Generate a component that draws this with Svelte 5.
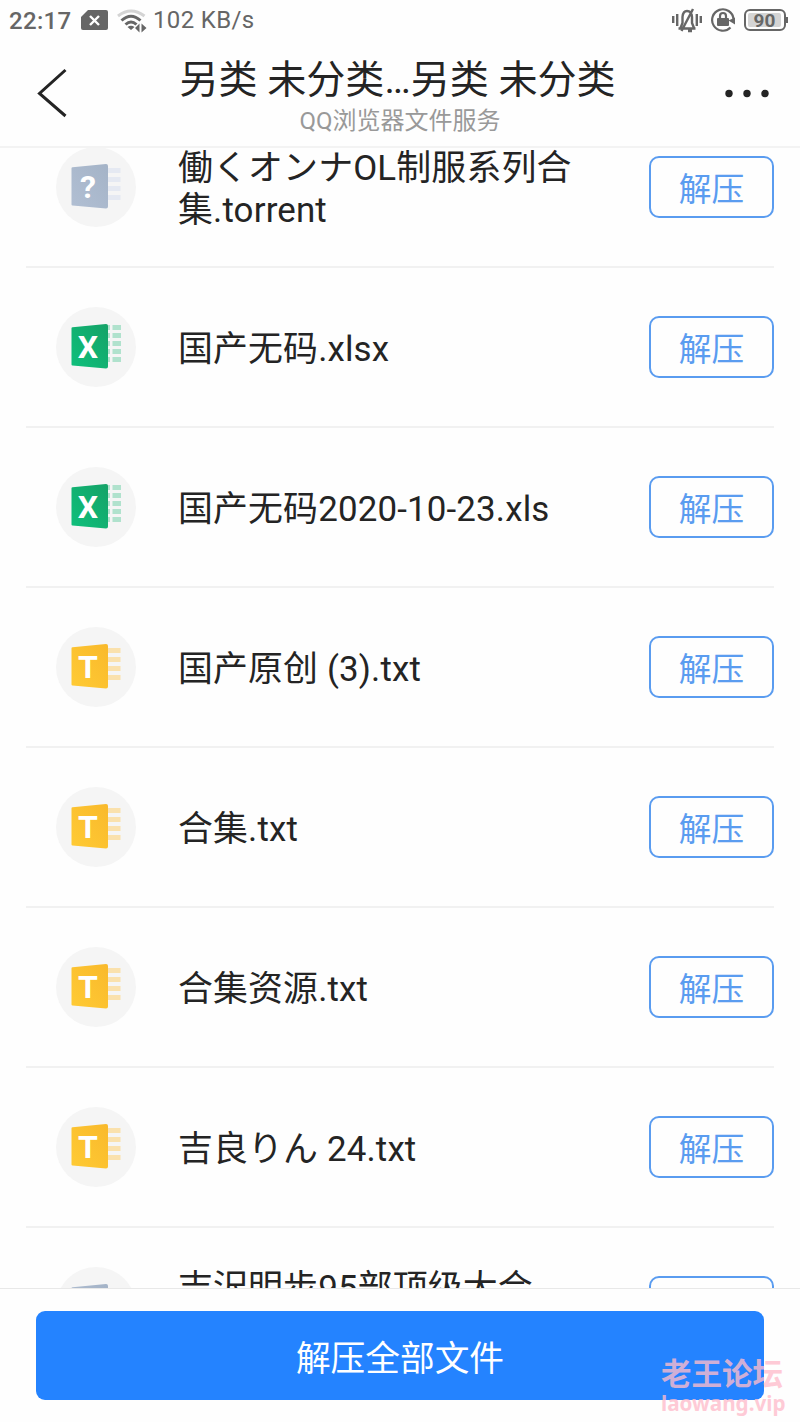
<script lang="ts">
    type FileKind = "unknown" | "sheet" | "text"

    const files: { name: string; kind: FileKind }[] = [
        { name: "働くオンナOL制服系列合集.torrent", kind: "unknown" },
        { name: "国产无码.xlsx", kind: "sheet" },
        { name: "国产无码2020-10-23.xls", kind: "sheet" },
        { name: "国产原创 (3).txt", kind: "text" },
        { name: "合集.txt", kind: "text" },
        { name: "合集资源.txt", kind: "text" },
        { name: "吉良りん 24.txt", kind: "text" },
        { name: "吉沢明步95部顶级大合集.torrent", kind: "unknown" },
    ]

    const letters = { unknown: "?", sheet: "X", text: "T" }
</script>

<div class="screen">
    <div class="status">
        <span class="clock">22:17</span>
        <svg class="sim" width="28" height="20" viewBox="0 0 28 20">
            <path d="M7 0H25Q27 0 27 2V18Q27 20 25 20H2Q0 20 0 18V7Z" />
            <path class="line" d="M9 6L18 15M18 6L9 15" />
        </svg>
        <svg class="wifi" width="32" height="24" viewBox="0 0 32 24">
            <path class="faint" d="M1 7Q14 -3 27.500 7" />
            <path d="M4.500 11.500Q14 3 23.500 11.500M8.500 15.500Q14 10.500 19.500 15.500" />
            <path class="fill" d="M10.500 18Q14 15.500 17.500 18L14 21ZM18 19L22.500 14.500V23.500ZM24.500 14.500L29.500 19L24.500 23.500Z" />
        </svg>
        <span class="speed">102 KB/s</span>
        <svg class="bell" width="30" height="26" viewBox="0 0 30 26">
            <path d="M1.200 9V16M5.200 7V19M24.800 7V19M28.800 9V16M6.500 21.500H23.500M8.500 21L10.500 16V10Q11 4 15 4Q19.500 4 20 10V16L22 21M21 2L9.500 24M16 24H20" />
        </svg>
        <svg class="lock" width="26" height="26" viewBox="0 0 26 26">
            <path class="ring" d="M20.500 20.500A10.700 10.700 0 1 1 23.500 12" />
            <path d="M18.500 13.500L25 17.500V10.500Z" />
            <rect x="7" y="11" width="12" height="8" rx="1" />
            <path class="shackle" d="M10 11V9Q10 6 13 6Q16 6 16 9V11" />
        </svg>
        <span class="battery"><span class="level">90</span></span>
        <span class="tip"></span>
    </div>

    <header>
        <svg class="back" width="32" height="50" viewBox="0 0 32 50">
            <path d="M28.500 2L2.500 25.500L28.500 48" />
        </svg>
        <div class="titles">
            <h1>另类 未分类…另类 未分类</h1>
            <p>QQ浏览器文件服务</p>
        </div>
        <svg class="more" width="46" height="10" viewBox="0 0 46 10">
            <circle cx="5" cy="5.500" r="3.700" />
            <circle cx="23" cy="5.500" r="3.700" />
            <circle cx="41" cy="5.500" r="3.700" />
        </svg>
    </header>

    <main>
        <ul>
            {#each files as file}
                <li>
                    <svg class="icon {file.kind}" width="80" height="80" viewBox="0 0 80 80">
                        <defs>
                            <linearGradient id="sheet" x1="0" y1="1" x2="1" y2="0">
                                <stop offset="0" stop-color="#0fc07c" />
                                <stop offset="1" stop-color="#14a267" />
                            </linearGradient>
                            <linearGradient id="text" x1="0" y1="1" x2="1" y2="0">
                                <stop offset="0" stop-color="#ffcb35" />
                                <stop offset="1" stop-color="#f9b92b" />
                            </linearGradient>
                            <linearGradient id="unknown" x1="0" y1="1" x2="1" y2="0">
                                <stop offset="0" stop-color="#b1bfd3" />
                                <stop offset="1" stop-color="#a4b3c7" />
                            </linearGradient>
                        </defs>
                        <circle cx="40" cy="40" r="40" />
                        {#if file.kind === "sheet"}
                            <path class="rows" d="M50 20.500H54M50 28.500H54M50 36.500H54M50 44.500H54M50 52.500H54M56.500 20.500H65M56.500 28.500H65M56.500 36.500H65M56.500 44.500H65M56.500 52.500H65" />
                        {:else}
                            <path class="rows" d="M50 23.500H64.500M50 32.500H64.500M50 41.500H64.500M50 50.500H64.500" />
                        {/if}
                        <path class="cover" fill="url(#{file.kind})" d="M16.500 20.200L50 17Q52 17 52 19V59.500Q52 61.500 50 61.500L16.500 58.500Q15.500 58.500 15.500 57.500V21.200Q15.500 20.300 16.500 20.200Z" />
                        <text x="32" y="51" text-anchor="middle">{letters[file.kind]}</text>
                    </svg>
                    <span class="name">{file.name}</span>
                    <button class="extract">解压</button>
                </li>
            {/each}
        </ul>
    </main>

    <footer>
        <button class="extract-all">解压全部文件</button>
    </footer>

    <div class="watermark">
        <span class="forum">老王论坛</span>
        <span class="site">laowang.vip</span>
    </div>
</div>

<style>
    :global(body) {
        margin: 0;
        background: #fefefe;
    }

    .screen {
        position: relative;
        display: flex;
        flex-direction: column;
        width: 800px;
        height: 1422px;
        overflow: hidden;
        background: #fefefe;
        color: #242424;
        font-family: Roboto, "Noto Sans CJK SC", sans-serif;
    }

    .status {
        display: flex;
        align-items: center;
        flex: none;
        box-sizing: border-box;
        height: 40px;
        padding: 0 12px 0 9px;
        color: #666;
        font-size: 24px;
    }

    .clock {
        width: 72px;
        padding-top: 2px;
        font-weight: 500;
        letter-spacing: 0.3px;
    }

    .status svg {
        flex: none;
        fill: #666;
    }

    .sim .line {
        stroke: #fff;
        stroke-width: 2.4;
    }

    .wifi {
        margin: 2px 4px 0 8px;
    }

    .status .wifi {
        fill: none;
        stroke: #666;
        stroke-width: 3;
    }

    .status .wifi .faint {
        stroke: #d4d4d4;
    }

    .status .wifi .fill {
        fill: #666;
        stroke: none;
    }

    .speed {
        flex: 1;
        letter-spacing: 0.35px;
    }

    .status .bell {
        margin-right: 8px;
        fill: none;
        stroke: #666;
        stroke-width: 2.4;
    }

    .lock {
        margin-right: 8px;
    }

    .lock .ring,
    .lock .shackle {
        fill: none;
        stroke: #666;
        stroke-width: 2.2;
    }

    .battery {
        box-sizing: border-box;
        width: 42px;
        height: 22px;
        padding: 2px;
        border: 2px solid #666;
        border-radius: 6px;
    }

    .level {
        display: block;
        width: 33px;
        height: 14px;
        border-radius: 2px;
        background: #d4d4d4;
        font-size: 19px;
        font-weight: 700;
        line-height: 15px;
        text-align: center;
    }

    .tip {
        width: 2px;
        height: 6px;
        background: #666;
    }

    header {
        display: flex;
        align-items: center;
        flex: none;
        box-sizing: border-box;
        height: 108px;
        padding: 0 30px 0 37px;
        border-bottom: 2px solid #f3f3f3;
    }

    .back {
        fill: none;
        stroke: #242424;
        stroke-width: 3;
    }

    .titles {
        flex: 1;
        padding: 6px 0 0 3px;
        text-align: center;
    }

    h1 {
        margin: 0 1px 0 0;
        font-size: 39.1px;
        font-weight: 400;
        line-height: 46px;
        white-space: nowrap;
    }

    .titles p {
        margin: 4px 0 0;
        padding-left: 4px;
        color: #999;
        font-size: 24px;
        line-height: 28px;
    }

    .more {
        fill: #242424;
    }

    main {
        flex: none;
        height: 1140px;
        overflow: hidden;
    }

    ul {
        margin: -40px 0 0;
        padding: 0 26px;
        list-style: none;
    }

    li {
        display: flex;
        align-items: center;
        box-sizing: border-box;
        height: 160px;
        padding-left: 29.5px;
        border-bottom: 2px solid #f1f1f1;
    }

    .icon {
        flex: none;
    }

    .icon circle {
        fill: #f5f5f5;
    }

    .icon text {
        fill: #fff;
        font-family: Roboto, sans-serif;
        font-size: 32px;
        font-weight: 700;
    }

    .rows {
        fill: none;
        stroke-width: 5;
    }

    .sheet .rows {
        stroke: #b0e2cd;
    }

    .text .rows {
        stroke: #fae1ad;
    }

    .unknown .rows {
        stroke: #e5e9f2;
    }

    .name {
        width: 400px;
        padding-top: 6px;
        margin: 0 auto 0 42.5px;
        font-size: 34.9px;
        letter-spacing: 0.15px;
        line-height: 42px;
    }

    button {
        padding: 0;
        font-family: inherit;
    }

    .extract {
        flex: none;
        box-sizing: border-box;
        width: 125px;
        height: 62px;
        padding-top: 6px;
        border: 2px solid #5a9cf0;
        border-radius: 10px;
        background: #fefefe;
        color: #5a9cf0;
        font-size: 32.7px;
        line-height: 52px;
    }

    footer {
        flex: 1;
        padding: 22px 36px 0;
        border-top: 1px solid #e8e8e8;
    }

    .extract-all {
        box-sizing: border-box;
        width: 100%;
        height: 89px;
        padding-top: 7px;
        border: 0;
        border-radius: 9px;
        background: #2483ff;
        color: #fff;
        font-size: 34.7px;
        line-height: 82px;
    }

    .watermark {
        position: absolute;
        top: 1357px;
        left: 661px;
        display: flex;
        flex-direction: column;
        color: #ffbccb;
        font-weight: 700;
        opacity: 0.78;
        white-space: nowrap;
    }

    .forum {
        font-size: 30.5px;
        line-height: 36px;
    }

    .site {
        font-family: "Noto Sans", sans-serif;
        font-size: 20.7px;
        line-height: 20px;
    }
</style>
